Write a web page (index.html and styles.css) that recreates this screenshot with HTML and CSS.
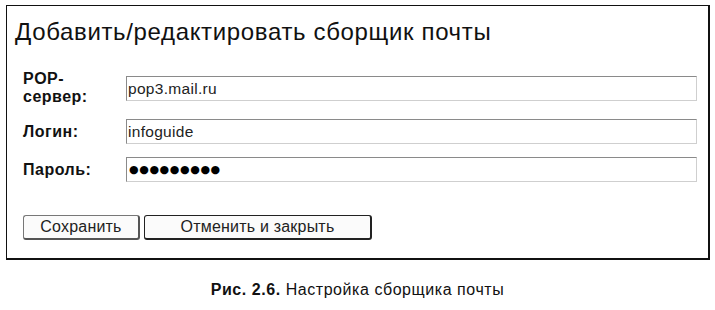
FILE: index.html
```html
<!DOCTYPE html>
<html lang="ru">
<head>
<meta charset="utf-8">
<title>Настройка сборщика почты</title>
<link rel="stylesheet" href="styles.css">
</head>
<body>
<div class="frame">
  <h1 class="title">Добавить/редактировать сборщик почты</h1>
  <div class="form">
    <div class="row">
      <label class="label">POP-<br>сервер:</label>
      <div class="input">pop3.mail.ru</div>
    </div>
    <div class="row">
      <label class="label">Логин:</label>
      <div class="input">infoguide</div>
    </div>
    <div class="row">
      <label class="label">Пароль:</label>
      <div class="input dots">●●●●●●●●●</div>
    </div>
  </div>
  <div class="buttons">
    <div class="btn btn-save">Сохранить</div>
    <div class="btn btn-cancel">Отменить и закрыть</div>
  </div>
</div>
<p class="caption"><b>Рис. 2.6.</b> Настройка сборщика почты</p>
</body>
</html>
```

FILE: styles.css
```css
html, body {
  margin: 0;
  padding: 0;
  background: #fff;
}
body {
  font-family: "Liberation Sans", Arial, sans-serif;
  color: #111;
  width: 715px;
  height: 310px;
  overflow: hidden;
}
.frame {
  box-sizing: border-box;
  margin: 5px 0 0 6px;
  width: 704px;
  height: 255px;
  border: 1px solid #111;
  border-right-width: 2px;
  border-bottom-width: 2px;
  padding: 0 0 0 8px;
}
.title {
  margin: 0;
  padding-top: 12px;
  font-weight: normal;
  font-size: 24px;
  line-height: 28px;
  letter-spacing: 0.65px;
  color: #111;
}
.form {
  margin-top: 24px;
  display: flex;
  flex-direction: column;
  gap: 13px;
  padding-left: 8px;
}
.row {
  display: grid;
  grid-template-columns: 103px 571px;
  align-items: center;
}
.label {
  font-weight: bold;
  font-size: 16px;
  line-height: 18px;
  letter-spacing: 0.5px;
  color: #111;
}
.input {
  box-sizing: border-box;
  height: 25px;
  border: 1px solid;
  border-color: #8a8a8a #cfcfcf #cfcfcf #8a8a8a;
  font-size: 15.5px;
  line-height: 23px;
  letter-spacing: 0.3px;
  padding-left: 1px;
  color: #222;
  background: #fff;
}
.dots {
  font-family: "DejaVu Sans", sans-serif;
  font-size: 11px;
  letter-spacing: 0.6px;
  padding-left: 2px;
  color: #000;
}
.buttons {
  margin-top: 33px;
  padding-left: 8px;
  display: flex;
  gap: 4px;
}
.btn {
  box-sizing: border-box;
  height: 25px;
  border: 1px solid #777;
  border-right: 2px solid #555;
  border-bottom: 2px solid #555;
  border-radius: 3px;
  background: #fbfbfb;
  font-size: 16px;
  line-height: 22px;
  letter-spacing: 0.2px;
  text-align: center;
  color: #222;
}
.btn-save { width: 117px; }
.btn-cancel {
  width: 228px;
  border-color: #222;
}
.caption {
  margin: 21px 0 0 0;
  text-align: center;
  font-size: 16px;
  line-height: 18px;
  letter-spacing: 0.55px;
  color: #111;
}
.caption b { font-weight: bold; }
```
